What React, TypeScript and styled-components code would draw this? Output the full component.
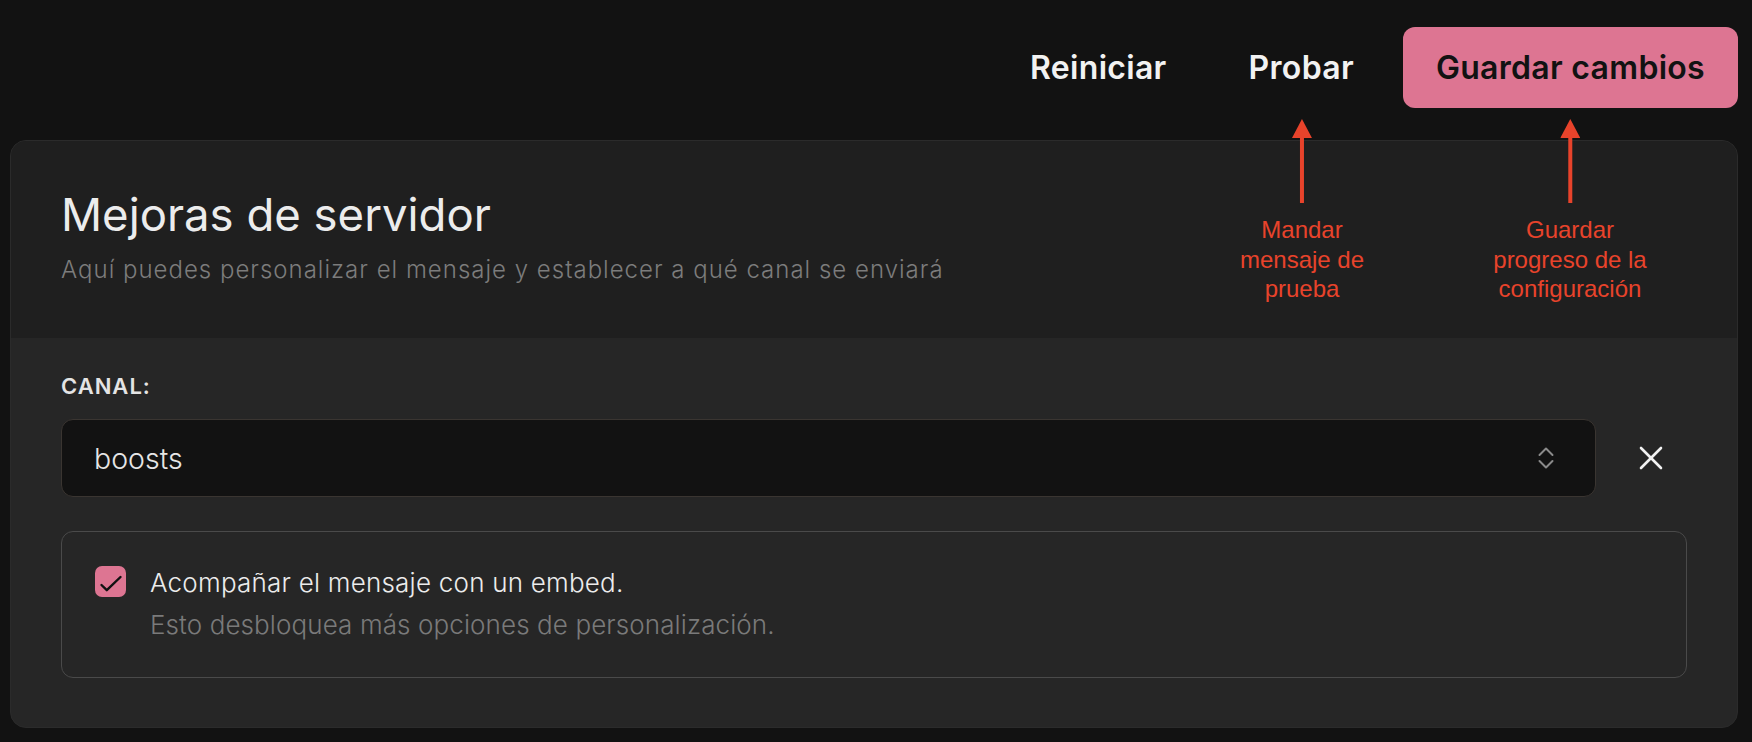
import styled, { createGlobalStyle } from 'styled-components';

const GlobalStyle = createGlobalStyle`
  html, body {
    margin: 0;
    padding: 0;
    background: #121212;
  }
  body {
    font-family: Inter, 'Noto Sans', sans-serif;
    color: #ececec;
  }
`;

const Page = styled.div`
  position: relative;
  padding: 27px 14px 15px 10px;
`;

const Toolbar = styled.div`
  display: flex;
  justify-content: flex-end;
  gap: 16px;
  margin-bottom: 32px;
`;

const Button = styled.button<{ $primary?: boolean }>`
  height: 81px;
  padding: 0 33px;
  border: none;
  border-radius: 12px;
  font-family: Inter, sans-serif;
  font-size: 32px;
  font-weight: 600;
  letter-spacing: 0.3px;
  cursor: pointer;
  background: ${({ $primary }) => ($primary ? '#dd7592' : 'transparent')};
  color: ${({ $primary }) => ($primary ? '#121212' : '#f2f2f2')};
`;

const Card = styled.section`
  background: #262626;
  border: 1px solid #2b2b2b;
  border-radius: 16px;
  overflow: hidden;
`;

const CardHeader = styled.header`
  background: #1f1f1f;
  padding: 47px 50px 52px 50px;
`;

const Title = styled.h1`
  margin: 0;
  font-size: 45.5px;
  line-height: 54px;
  font-weight: 400;
  color: #ececec;
`;

const Subtitle = styled.p`
  margin: 12px 0 0;
  font-size: 24px;
  line-height: 32px;
  font-weight: 300;
  letter-spacing: 1px;
  color: #7c7c7c;
`;

const CardBody = styled.div`
  padding: 35px 50px 49px;
`;

const Label = styled.div`
  font-size: 22px;
  font-weight: 600;
  letter-spacing: 1px;
  color: #e4e4e4;
`;

const SelectRow = styled.div`
  display: flex;
  align-items: center;
  gap: 19px;
  margin-top: 20px;
`;

const SelectBox = styled.div`
  flex: 1;
  height: 76px;
  display: flex;
  align-items: center;
  justify-content: space-between;
  padding: 0 41px 0 32px;
  background: #121212;
  border: 1px solid #3a3531;
  border-radius: 12px;
  font-size: 28.5px;
  font-weight: 300;
  color: #e6e6e6;
`;

const ClearButton = styled.button`
  width: 72px;
  height: 48px;
  display: flex;
  align-items: center;
  justify-content: center;
  background: transparent;
  border: none;
  padding: 0;
  cursor: pointer;
`;

const EmbedBox = styled.label`
  display: flex;
  align-items: flex-start;
  gap: 24px;
  margin-top: 34px;
  padding: 34px 33px 35px;
  border: 1px solid #4a4a4a;
  border-radius: 12px;
  cursor: pointer;
`;

const Checkbox = styled.span<{ $checked: boolean }>`
  flex: none;
  width: 31px;
  height: 31px;
  border-radius: 7px;
  display: flex;
  align-items: center;
  justify-content: center;
  background: ${({ $checked }) => ($checked ? '#dd7592' : 'transparent')};
`;

const EmbedText = styled.div`
  display: flex;
  flex-direction: column;
  gap: 8px;
`;

const EmbedTitle = styled.span`
  font-size: 26px;
  line-height: 34px;
  font-weight: 300;
  letter-spacing: 0.22px;
  color: #ececec;
`;

const EmbedHint = styled.span`
  font-size: 26px;
  line-height: 34px;
  font-weight: 300;
  letter-spacing: 0.1px;
  color: #7a7a7a;
`;

const Note = styled.div<{ $x: number }>`
  position: absolute;
  top: 119px;
  left: ${({ $x }) => $x}px;
  transform: translateX(-50%);
  display: flex;
  flex-direction: column;
  align-items: center;
  pointer-events: none;
`;

const NoteText = styled.div`
  margin-top: 12px;
  font-family: 'Liberation Sans', Arial, sans-serif;
  font-size: 24px;
  line-height: 29.5px;
  text-align: center;
  color: #e8432b;
  white-space: nowrap;
`;

const Arrow = () => (
  <svg width="20" height="84" viewBox="0 0 20 84">
    <polygon points="10,0 20,19 0,19" fill="#e8432b" />
    <rect x="8" y="17" width="4" height="67" fill="#e8432b" />
  </svg>
);

const notes = [
  { x: 1302, lines: ['Mandar', 'mensaje de', 'prueba'] },
  { x: 1570, lines: ['Guardar', 'progreso de la', 'configuración'] },
];

export default function App() {
  return (
    <Page>
      <GlobalStyle />
      <Toolbar>
        <Button>Reiniciar</Button>
        <Button>Probar</Button>
        <Button $primary>Guardar cambios</Button>
      </Toolbar>

      <Card>
        <CardHeader>
          <Title>Mejoras de servidor</Title>
          <Subtitle>Aquí puedes personalizar el mensaje y establecer a qué canal se enviará</Subtitle>
        </CardHeader>
        <CardBody>
          <Label>CANAL:</Label>
          <SelectRow>
            <SelectBox>
              <span>boosts</span>
              <svg width="16" height="24" viewBox="0 0 16 24" fill="none" stroke="#8a8a8a" strokeWidth="2" strokeLinecap="round" strokeLinejoin="round">
                <path d="M1.5 9 L8 2.5 L14.5 9" />
                <path d="M1.5 15 L8 21.5 L14.5 15" />
              </svg>
            </SelectBox>
            <ClearButton aria-label="Quitar canal">
              <svg width="24" height="24" viewBox="0 0 24 24" fill="none" stroke="#f2f2f2" strokeWidth="2.6" strokeLinecap="round">
                <path d="M2 2 L22 22" />
                <path d="M22 2 L2 22" />
              </svg>
            </ClearButton>
          </SelectRow>

          <EmbedBox>
            <Checkbox $checked>
              <svg width="31" height="31" viewBox="0 0 31 31" fill="none" stroke="#111" strokeWidth="2.4" strokeLinecap="round" strokeLinejoin="round">
                <path d="M6.5 19 L11.8 24.2 L25.5 11" />
              </svg>
            </Checkbox>
            <EmbedText>
              <EmbedTitle>Acompañar el mensaje con un embed.</EmbedTitle>
              <EmbedHint>Esto desbloquea más opciones de personalización.</EmbedHint>
            </EmbedText>
          </EmbedBox>
        </CardBody>
      </Card>

      {notes.map((note) => (
        <Note key={note.x} $x={note.x}>
          <Arrow />
          <NoteText>
            {note.lines.map((line) => (
              <div key={line}>{line}</div>
            ))}
          </NoteText>
        </Note>
      ))}
    </Page>
  );
}
